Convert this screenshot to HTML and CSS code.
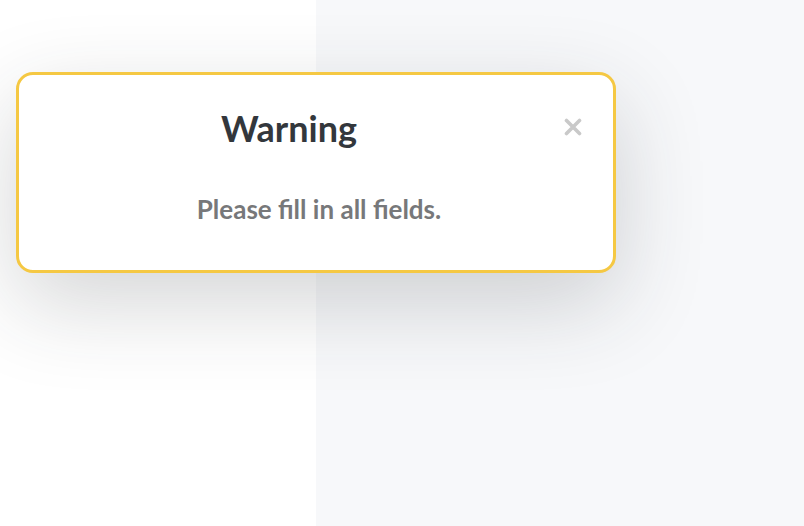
FILE: index.html
```html
<!DOCTYPE html>
<html lang="en">
<head>
<meta charset="utf-8">
<link rel="stylesheet" href="styles.css">
</head>
<body>
<div class="page">
  <div class="left-panel"></div>
  <div class="right-panel"></div>
</div>
<div class="overlay">
  <div class="modal">
    <div class="modal-head">
      <h2 class="modal-title">Warning</h2>
      <button class="modal-close" aria-label="Close">
        <svg width="18" height="18" viewBox="0 0 18 18"><path d="M2.5 2.5 L15.5 15.5 M15.5 2.5 L2.5 15.5" stroke="#c9c9c9" stroke-width="3.6" stroke-linecap="round"/></svg>
      </button>
    </div>
    <p class="modal-text">Please fill in all fields.</p>
  </div>
</div>
</body>
</html>
```

FILE: styles.css
```css
* { box-sizing: border-box; }
html, body { margin: 0; height: 100%; }
body {
  font-family: Lato, "Noto Sans", sans-serif;
  background: #f7f8fa;
  overflow: hidden;
}
.page {
  display: flex;
  height: 100%;
}
.left-panel {
  width: 316px;
  background: #ffffff;
}
.right-panel {
  flex: 1;
  background: #f7f8fa;
}
.overlay {
  position: absolute;
  left: 16px;
  top: 72px;
}
.modal {
  width: 600px;
  height: 201px;
  background: #fff;
  border: 3px solid #f5c843;
  border-radius: 17px;
  box-shadow: 0 30px 90px rgba(40, 44, 52, 0.2);
  padding: 27px 20px 0 20px;
}
.modal-head {
  display: flex;
  align-items: flex-start;
}
.modal-title {
  flex: 1;
  margin: 0;
  padding-right: 14px;
  text-align: center;
  font-size: 36px;
  font-weight: 700;
  color: #33373c;
  line-height: 52px;
}
.modal-close {
  border: 0;
  background: none;
  padding: 0;
  margin-top: 16px;
  width: 40px;
  display: flex;
  justify-content: center;
}
.modal-text {
  margin: 39px 0 0 6px;
  text-align: center;
  font-size: 26px;
  font-weight: 700;
  color: #77787a;
}
```
